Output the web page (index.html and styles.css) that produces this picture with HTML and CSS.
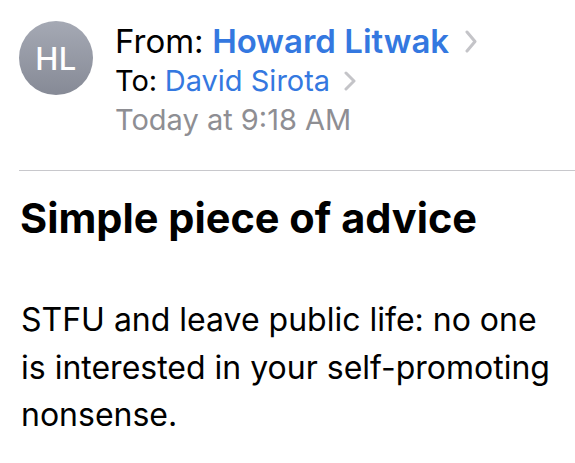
FILE: index.html
```html
<!DOCTYPE html>
<html>
<head>
<meta charset="utf-8">
<link rel="stylesheet" href="styles.css">
</head>
<body>
<div class="mail">
  <div class="header">
    <div class="avatar">HL</div>
    <div class="meta">
      <div class="from"><span class="label">From:</span><span class="name">Howard Litwak</span><svg class="chev chev-lg" viewBox="0 0 12 23"><path d="M2 2 L10 11.5 L2 21" /></svg></div>
      <div class="to"><span class="label">To:</span><span class="name-to">David Sirota</span><svg class="chev chev-sm" viewBox="0 0 12 20"><path d="M2 2 L10 10 L2 18" /></svg></div>
      <div class="date">Today at 9:18 AM</div>
    </div>
  </div>
  <div class="divider"></div>
  <h1 class="subject">Simple piece of advice</h1>
  <p class="body">STFU and leave public life: no one is interested in your self-promoting nonsense.</p>
</div>
</body>
</html>
```
FILE: styles.css
```css
html, body {
  margin: 0;
  padding: 0;
  background: #ffffff;
}
.mail {
  width: 575px;
  height: 463px;
  overflow: hidden;
  font-family: "Inter", "Liberation Sans", sans-serif;
  color: #000;
}
.header {
  display: flex;
  align-items: flex-start;
  padding: 21px 0 0 19px;
  gap: 22px;
}
.avatar {
  width: 74px;
  height: 74px;
  border-radius: 50%;
  background: linear-gradient(180deg, #a5a9b4 0%, #868a96 100%);
  color: #fff;
  font-size: 31px;
  font-weight: 500;
  display: flex;
  align-items: center;
  justify-content: center;
  letter-spacing: 0.5px;
}
.meta {
  display: flex;
  flex-direction: column;
}
.from, .to {
  display: flex;
  align-items: center;
}
.from {
  font-size: 33px;
  line-height: 40px;
  height: 40px;
}
.label {
  margin-right: 0.26em;
}
.name {
  color: #3478e0;
  font-weight: 600;
}
.to {
  font-size: 29px;
  line-height: 39px;
  height: 39px;
}
.name-to {
  color: #3478e0;
}
.date {
  font-size: 29px;
  line-height: 39px;
  color: #8e8e93;
}
.chev {
  fill: none;
  stroke: #c4c4c8;
  stroke-width: 3;
  stroke-linecap: round;
  stroke-linejoin: round;
}
.chev-lg {
  width: 12px;
  height: 23px;
  margin-left: 16px;
}
.chev-sm {
  width: 12px;
  height: 20px;
  margin-left: 14px;
}
.divider {
  margin: 31px 0 0 19px;
  height: 1px;
  background: #c8c8cc;
}
.subject {
  margin: 0;
  padding: 22px 0 0 20px;
  font-size: 41.5px;
  font-weight: 700;
  line-height: 50px;
}
.body {
  margin: 0;
  padding: 53px 10px 0 21px;
  font-size: 32px;
  line-height: 47.5px;
}
```
